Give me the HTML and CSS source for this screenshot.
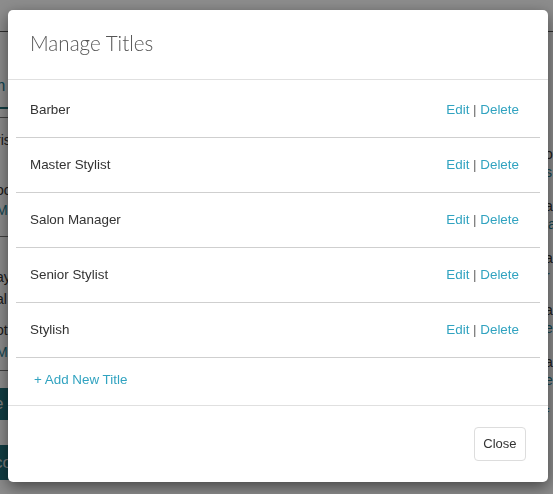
FILE: index.html
```html
<!DOCTYPE html>
<html>
<head>
<meta charset="utf-8">
<link rel="stylesheet" href="styles.css">
</head>
<body>
<div class="page">
  <div class="bg-left">
    <div class="bg-top"></div>
    <div class="bg-tab teal">m</div>
    <div class="bg-block first"><span class="l1">ris</span><span class="l2">oo</span><span class="l3 teal">M</span></div>
    <div class="bg-block second"><span class="l1">ay</span><span class="l2">al</span><span class="l3">ot</span><span class="l4 teal">M</span></div>
    <div class="bg-btn">e</div>
    <div class="bg-btn last">co</div>
  </div>
  <div class="bg-right">
    <div class="bg-top"></div>
    <div class="r-item first"><span>o</span><span class="teal">s</span></div>
    <div class="r-item"><span>a</span><span class="teal">la</span></div>
    <div class="r-item"><span>a</span><span class="teal">r</span></div>
    <div class="r-item"><span>a</span><span class="teal">e</span></div>
    <div class="r-item"><span>a</span><span class="teal">e</span></div>
    <div class="r-item short"><span class="teal">f</span></div>
  </div>
</div>
<div class="overlay">
  <div class="modal">
    <div class="modal-header">
      <h4 class="modal-title">Manage Titles</h4>
    </div>
    <div class="modal-body">
      <ul class="title-list">
        <li class="title-row"><span class="name">Barber</span><span class="actions"><a>Edit</a> | <a>Delete</a></span></li>
        <li class="title-row"><span class="name">Master Stylist</span><span class="actions"><a>Edit</a> | <a>Delete</a></span></li>
        <li class="title-row"><span class="name">Salon Manager</span><span class="actions"><a>Edit</a> | <a>Delete</a></span></li>
        <li class="title-row"><span class="name">Senior Stylist</span><span class="actions"><a>Edit</a> | <a>Delete</a></span></li>
        <li class="title-row"><span class="name">Stylish</span><span class="actions"><a>Edit</a> | <a>Delete</a></span></li>
      </ul>
      <a class="add-link">+ Add New Title</a>
    </div>
    <div class="modal-footer">
      <button class="btn">Close</button>
    </div>
  </div>
</div>
</body>
</html>
```

FILE: styles.css
```css
* { box-sizing: border-box; }
html, body { margin: 0; height: 100%; }
body {
  font-family: "Liberation Sans", Arial, sans-serif;
  font-size: 13.4px;
  color: #333;
  background: #fff;
  overflow: hidden;
}
.page {
  display: flex;
  justify-content: space-between;
  height: 494px;
}
.teal { color: #1f7f96; }
.bg-left { width: 30px; display: flex; flex-direction: column; font-size: 14px; }
.bg-right { width: 30px; display: flex; flex-direction: column; font-size: 14px; }
.bg-top { height: 32px; border-bottom: 1px solid #555; flex: none; }
.bg-tab {
  flex: none;
  height: 77px;
  padding-top: 45px;
  border-bottom: 2px solid #1f6f7a;
  font-size: 16px;
  line-height: 18px;
  text-indent: -8px;
}
.bg-block {
  flex: none;
  display: flex; flex-direction: column;
  border-top: 1px solid #777;
  line-height: 18px;
  text-indent: -4px;
}
.bg-block.first { margin-top: 8px; height: 119px; padding-top: 13px; }
.bg-block.first .l2 { margin-top: 32px; }
.bg-block.first .l3 { margin-top: 2px; }
.bg-block.second { height: 135px; padding-top: 31px; border-bottom: 1px solid #777; }
.bg-block.second .l2 { margin-top: 4px; }
.bg-block.second .l3 { margin-top: 13px; }
.bg-block.second .l4 { margin-top: 4px; }
.bg-btn {
  flex: none;
  margin-top: 17px;
  height: 32px;
  background: #1f6f7a;
  color: #ddd;
  font-size: 17px;
  line-height: 32px;
  text-indent: -6px;
}
.bg-btn.last { margin-top: 25px; height: 35px; line-height: 35px; }
.r-item {
  flex: none;
  display: flex; flex-direction: column;
  padding-left: 22px;
  line-height: 18px; margin-top: 16px;
}
.r-item.first { margin-top: 113px; }

.overlay {
  position: fixed;
  inset: 0;
  background: rgba(0, 0, 0, 0.45);
}
.modal {
  margin: 10px 0 0 8px;
  width: 540px;
  background: #fff;
  border-radius: 5px;
  box-shadow: 0 5px 15px rgba(0, 0, 0, 0.5);
  display: flex;
  flex-direction: column;
}
.modal-header {
  padding: 19px 22px 21px;
  border-bottom: 1px solid #e0e0e0;
}
.modal-title {
  margin: 0;
  font-family: Lato, "Noto Sans", sans-serif;
  font-weight: 300;
  font-size: 20.6px;
  line-height: 29px;
  color: #555;
}
.modal-body {
  padding: 3px 8px 0;
}
.title-list { list-style: none; margin: 0; padding: 0; }
.title-row {
  display: flex;
  justify-content: space-between;
  align-items: center;
  height: 55px;
  padding: 0 21px 2px 14px;
  border-bottom: 1px solid #cfcfcf;
}
.name { color: #333; }
.actions { color: #666; }
.actions a, .add-link { color: #31a3c0; text-decoration: none; }
.add-link {
  display: flex;
  align-items: center;
  height: 47px;
  padding: 0 0 4px 18px;
}
.modal-footer {
  display: flex;
  justify-content: flex-end;
  padding: 21px 22px 21px;
  border-top: 1px solid #e0e0e0;
}
.btn {
  font-family: "Liberation Sans", Arial, sans-serif;
  font-size: 13px;
  color: #333;
  background: #fff;
  border: 1px solid #ddd;
  border-radius: 4px;
  height: 34px;
  padding: 0 8.5px 2px;
}
```
